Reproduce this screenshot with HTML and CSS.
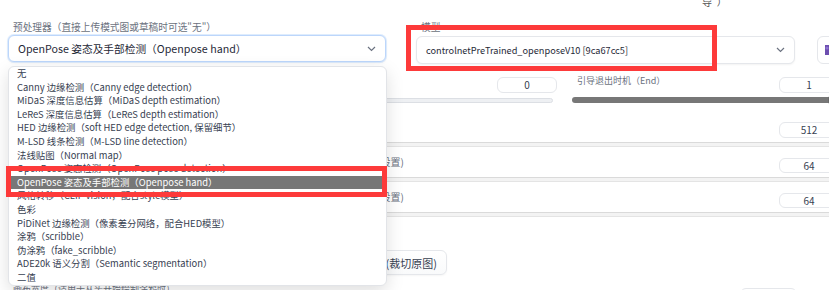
FILE: index.html
```html
<!DOCTYPE html>
<html lang="zh-CN">
<head>
<meta charset="utf-8">
<title>ControlNet</title>
<link rel="stylesheet" href="styles.css">
</head>
<body>
<div class="page">
  <div class="row0">
    <div></div>
    <div class="tail">导"）</div>
  </div>

  <div class="row1">
    <div class="cell">
      <div class="label">预处理器（直接上传模式图或草稿时可选"无"）</div>
      <div class="select-wrap">
        <div class="select focus">
          <span>OpenPose 姿态及手部检测（Openpose hand）</span>
          <svg class="chev" width="9" height="6" viewBox="0 0 9 6"><path d="M1 1l3.5 3.5L8 1" fill="none" stroke="#6b7280" stroke-width="1.2"/></svg>
        </div>
        <ul class="dd">
          <li>无</li>
          <li>Canny 边缘检测（Canny edge detection）</li>
          <li>MiDaS 深度信息估算（MiDaS depth estimation）</li>
          <li>LeReS 深度信息估算（LeReS depth estimation）</li>
          <li>HED 边缘检测（soft HED edge detection, 保留细节）</li>
          <li>M-LSD 线条检测（M-LSD line detection）</li>
          <li>法线贴图（Normal map）</li>
          <li>OpenPose 姿态检测（OpenPose pose detection）</li>
          <li class="sel">OpenPose 姿态及手部检测（Openpose hand）</li>
          <li>风格转移（CLIP vision，配合style模型）</li>
          <li>色彩</li>
          <li>PiDiNet 边缘检测（像素差分网络，配合HED模型）</li>
          <li>涂鸦（scribble）</li>
          <li>伪涂鸦（fake_scribble）</li>
          <li>ADE20k 语义分割（Semantic segmentation）</li>
          <li>二值</li>
          <li class="ann ann1"></li>
        </ul>
      </div>
    </div>
    <div class="cell">
      <div class="label">模型</div>
      <div class="model-row">
        <div class="select model">
          <span>controlnetPreTrained_openposeV10 [9ca67cc5]</span>
          <svg class="chev" width="9" height="6" viewBox="0 0 9 6"><path d="M1 1l3.5 3.5L8 1" fill="none" stroke="#6b7280" stroke-width="1.2"/></svg>
        </div>
        <div class="icon-btn">
          <svg width="14" height="14" viewBox="0 0 14 14"><path d="M2 2h6l2 2v5H6v3H2z" fill="#6d4fb0"/><circle cx="4" cy="5" r="1.6" fill="#8e73d1"/></svg>
        </div>
      </div>
      <div class="ann ann2"></div>
    </div>
  </div>

  <div class="sliders">
    <div class="slider">
      <div class="slider-head">
        <span class="slabel">引导介入时机（Start）</span>
        <div class="num">0</div>
      </div>
      <div class="track light"></div>
    </div>
    <div class="slider">
      <div class="slider-head">
        <span class="slabel">引导退出时机（End）</span>
        <div class="num">1</div>
      </div>
      <div class="track dark"><span class="thumb"></span></div>
    </div>
  </div>

  <div class="r512">
    <span class="slabel">预处理器分辨率</span>
    <div class="num">512</div>
  </div>
  <div class="sep"></div>
  <div class="prow">
    <span class="plabel">阈值 A（Threshold A，部分预处理器需设置)</span>
    <div class="num">64</div>
  </div>
  <div class="sep"></div>
  <div class="prow">
    <span class="plabel">阈值 B（Threshold B，部分预处理器需设置)</span>
    <div class="num">64</div>
  </div>
  <div class="sep"></div>

  <div class="mode-row">
    <div class="btn w1">仅调整大小（拉伸）</div>
    <div class="btn w2">缩放后裁剪(裁切原图)</div>
  </div>

  <div class="last-row">
    <span class="slabel">画布宽度（适用于从头开始绘制涂鸦时）</span>
    <div class="num small"></div>
  </div>
</div>
</body>
</html>
```

FILE: styles.css
```css
html, body {
  margin: 0;
  padding: 0;
  overflow: hidden;
  background: #ffffff;
}

body {
  width: 829px;
  height: 290px;
  font-family: "Noto Sans CJK SC", "Noto Sans", sans-serif;
  color: #374151;
}

.page {
  margin-left: 8px;
  width: 831px;
}

.row0 {
  display: grid;
  grid-template-columns: 378px 1fr;
  column-gap: 30px;
  height: 6px;
}

.tail {
  padding-left: 286px;
  font-size: 10px;
  line-height: 4px;
  color: #555;
  white-space: nowrap;
}

.row1 {
  display: grid;
  grid-template-columns: 378px 1fr;
  column-gap: 30px;
  margin-top: 14px;
}

.cell {
  position: relative;
}

.label {
  font-size: 9.7px;
  line-height: 14px;
  height: 14px;
  padding-left: 5px;
  color: #6b7280;
  white-space: nowrap;
}

.select-wrap {
  position: relative;
  margin-top: 1px;
}

.select {
  box-sizing: border-box;
  height: 27px;
  border: 1px solid #e5e7eb;
  border-radius: 6px;
  display: flex;
  align-items: center;
  justify-content: space-between;
  padding: 0 9px;
  font-size: 10.7px;
  color: #1f2937;
  background: #fff;
  box-shadow: 0 1px 2px rgba(0, 0, 0, 0.05);
  white-space: nowrap;
}

.select.focus {
  border-color: #bcd6fb;
  box-shadow: 0 0 0 1px rgba(191, 219, 254, 0.5), 0 1px 3px rgba(0, 0, 0, 0.06);
}

.model-row {
  display: flex;
  gap: 22px;
  margin-top: 2px;
}

.select.model {
  width: 379px;
  height: 28px;
  flex: none;
  font-size: 9.2px;
}

.icon-btn {
  flex: none;
  box-sizing: border-box;
  width: 28px;
  height: 28px;
  border: 1px solid #e5e7eb;
  border-radius: 6px;
  display: flex;
  align-items: center;
  justify-content: flex-start;
  padding-left: 5px;
  background: #fff;
}

.dd {
  position: absolute;
  top: calc(100% + 4px);
  left: 0;
  right: -1px;
  margin: 0;
  padding: 0;
  list-style: none;
  background: #fff;
  border: 1px solid #e2e4e8;
  border-radius: 6px;
  box-shadow: 0 6px 18px rgba(0, 0, 0, 0.13);
  font-size: 9.4px;
  color: #374151;
  z-index: 10;
}

.dd li {
  height: 13.6px;
  line-height: 13.6px;
  padding-left: 8px;
  white-space: nowrap;
}

.dd li.sel {
  background: #777777;
  color: #ffffff;
}

.ann {
  position: absolute;
  box-sizing: border-box;
  border: 5px solid #fd3a3a;
  z-index: 20;
}

.dd li.ann1 {
  left: -3px;
  top: 99px;
  width: 381px;
  height: 31px;
  padding: 0;
}

.ann2 {
  left: -10px;
  top: 5px;
  width: 311px;
  height: 46px;
}

.sliders {
  display: grid;
  grid-template-columns: 549px 1fr;
  column-gap: 15px;
  margin-top: 10px;
}

.slider-head {
  display: flex;
  justify-content: space-between;
  align-items: flex-start;
  height: 19px;
}

.slabel {
  font-size: 9px;
  line-height: 14px;
  color: #6b7280;
  padding-left: 5px;
  white-space: nowrap;
}

.num {
  box-sizing: border-box;
  flex: none;
  width: 60px;
  height: 16px;
  margin-top: 3px;
  border: 1px solid #e5e7eb;
  border-radius: 6px;
  font-size: 10px;
  line-height: 14px;
  text-align: center;
  color: #374151;
  background: #fff;
}

.track {
  position: relative;
  border-radius: 3px;
}

.track.light {
  margin-top: 5px;
  width: 545px;
  height: 5px;
  box-sizing: border-box;
  background: #eef0f3;
  border: 1px solid #dcdfe4;
}

.track.dark {
  margin-top: 4px;
  height: 6px;
  background: #777777;
}

.thumb {
  position: absolute;
  right: -3px;
  top: -4px;
  width: 14px;
  height: 14px;
  border-radius: 50%;
  background: #6a6a6a;
}

.r512 {
  display: flex;
  justify-content: space-between;
  align-items: flex-start;
  padding-top: 16px;
  padding-bottom: 4px;
}

.r512 .num {
  margin-top: 3px;
}

.sep {
  box-sizing: border-box;
  height: 5px;
  border-top: 1px solid #dadada;
  border-bottom: 1px solid #e4e4e4;
  background: #f3f3f3;
}

.prow {
  display: flex;
  justify-content: space-between;
  align-items: flex-start;
  height: 30px;
}

.plabel {
  width: 396px;
  padding-top: 8px;
  font-size: 10px;
  line-height: 14px;
  color: #6b7280;
  text-align: right;
  white-space: nowrap;
  overflow: hidden;
}

.prow .num {
  margin-top: 11px;
  height: 15px;
  line-height: 13px;
}

.mode-row {
  display: flex;
  gap: 8px;
  padding-left: 101px;
  margin-top: 33px;
}

.btn {
  box-sizing: border-box;
  height: 25px;
  border: 1px solid #e5e7eb;
  border-radius: 6px;
  display: flex;
  align-items: center;
  justify-content: flex-end;
  padding-right: 9px;
  font-size: 11px;
  color: #374151;
  background: linear-gradient(#ffffff, #f9fafb);
  box-shadow: 0 1px 2px rgba(0, 0, 0, 0.04);
  white-space: nowrap;
}

.btn.w1 {
  width: 160px;
}

.btn.w2 {
  width: 170px;
}

.last-row {
  display: flex;
  justify-content: space-between;
  align-items: flex-start;
  margin-top: 7px;
  padding-right: 42px;
}

.num.small {
  width: 57px;
  margin-top: 6px;
}
```
